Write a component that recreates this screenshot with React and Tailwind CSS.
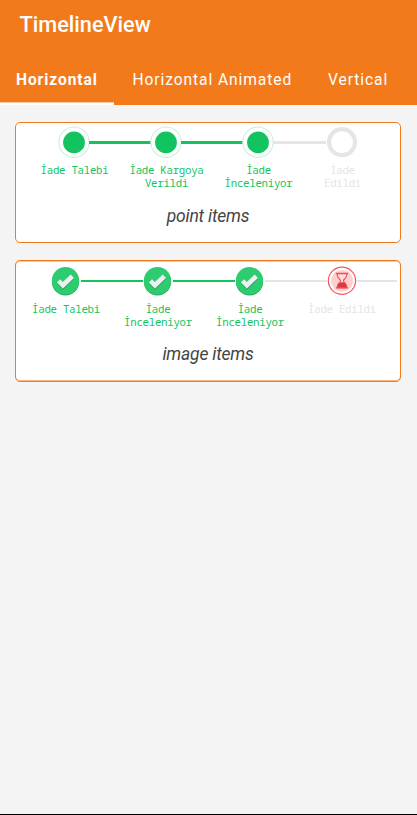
import React from "react";

function Line({ className }) {
  return <div className={`shrink-0 ${className}`} />;
}

function DonePoint() {
  return (
    <svg className="h-8 w-8 shrink-0" viewBox="0 0 32 32">
      <circle cx="16" cy="16.2" r="15.2" fill="#fff" stroke="#c9f0d8" strokeWidth="1.1" />
      <circle cx="16" cy="16.4" r="10.9" fill="#12c35f" />
    </svg>
  );
}

function PendingPoint() {
  return (
    <svg className="h-8 w-8 shrink-0" viewBox="0 0 32 32">
      <circle cx="16" cy="16.1" r="13" fill="#fff" stroke="#e5e5e5" strokeWidth="4.2" />
    </svg>
  );
}

function CheckImage() {
  return (
    <svg className="h-8 w-8 shrink-0" viewBox="0 0 32 32">
      <circle cx="15.5" cy="18" r="13.6" fill="#27ae60" />
      <circle cx="15.5" cy="16.8" r="13.7" fill="#2ecc71" />
      <path d="M6.9 19.8 10 16.6 12.9 19.3 20.8 12 23.9 15.3 12.9 26Z" fill="#27ae60" />
      <path d="M6.9 18.4 10 15.2 12.9 17.9 20.8 10.6 23.9 13.9 12.9 24.6Z" fill="#ecf0f1" />
    </svg>
  );
}

function HourglassImage() {
  return (
    <svg className="h-8 w-8 shrink-0" viewBox="0 0 32 32">
      <circle cx="16" cy="16.8" r="13.6" fill="#fff" stroke="#f2585b" strokeWidth="1.2" />
      <circle cx="16" cy="16.8" r="10.9" fill="#ffd0d0" />
      <path
        d="M11.4 9.6v2.2c0 2.4 3.2 3.2 3.2 5s-3.2 2.6-3.2 5V23.6h9.2v-1.8c0-2.4-3.2-3.2-3.2-5s3.2-2.6 3.2-5V9.6"
        fill="#ffdede"
        stroke="#f2585b"
        strokeWidth="1.2"
      />
      <path d="M11.3 23.4c0-3.2 1.9-5.2 4.7-5.2s4.7 2 4.7 5.2Z" fill="#d93a40" />
      <path d="M9.8 9.5h12.4M9.8 23.8h12.4" stroke="#ee4c50" strokeWidth="1.3" />
    </svg>
  );
}

function Label({ className, children }) {
  return (
    <div className={`shrink-0 text-center whitespace-pre-line ${className}`}>{children}</div>
  );
}

export default function App() {
  return (
    <div className="flex h-[815px] w-[417px] flex-col overflow-hidden border-b border-black bg-[#f4f4f4] font-['Roboto',sans-serif]">
      <header className="flex h-[105px] shrink-0 flex-col bg-[#f37a1b] text-white">
        <h1 className="h-[55px] pt-[9px] pl-[19.5px] text-[21.7px] leading-8 font-medium whitespace-nowrap">TimelineView</h1>
        <nav className="flex h-[50px] text-[15.6px] leading-[51px] tracking-[0.91px] whitespace-nowrap">
          <div className="w-[114px] shrink-0 border-b-2 border-white pl-4 font-bold shadow-[inset_0_-1px_0_#fac9a0] tracking-[0.9px]">Horizontal</div>
          <div className="w-[196px] shrink-0 pl-[18.5px]">Horizontal Animated</div>
          <div className="pl-[18px]">Vertical</div>
        </nav>
      </header>

      <main className="flex flex-col gap-[17px] pt-[17px] pr-4 pl-[15px]">
        <section className="h-[121px] overflow-hidden rounded-[5px] border border-[#f37a1b] bg-white">
          <div className="flex items-center pt-[3px] pl-[42px]">
            <DonePoint />
            <Line className="-mx-px h-[3px] w-[62px] bg-[#12c35f]" />
            <DonePoint />
            <Line className="-mx-px h-[3px] w-[62px] bg-[#12c35f]" />
            <DonePoint />
            <Line className="-ml-px h-[3px] w-[53px] bg-[#e5e5e5]" />
            <PendingPoint />
          </div>
          <div className="flex pt-[6px] pl-[12.5px] font-['Noto_Sans_Mono','DejaVu_Sans_Mono',monospace] text-[10.7px] leading-[13px] tracking-[-0.25px] text-[#12c35f]">
            <Label className="w-[92px]">İade Talebi</Label>
            <Label className="w-[92px]">{"İade Kargoya\nVerildi"}</Label>
            <Label className="w-[92px]">{"İade\nİnceleniyor"}</Label>
            <Label className="w-[76px] text-[#e5e5e5]">{"İade\nEdildi"}</Label>
          </div>
          <p className="pt-[14px] text-center text-[17.5px] leading-6 tracking-[-0.2px] text-[#444] italic">point items</p>
        </section>

        <section className="h-[122px] overflow-hidden rounded-[5px] border border-[#f37a1b] bg-white shadow-[inset_0_1px_0_#fac9a0,inset_0_-1px_0_#f9b582]">
          <div className="flex items-center pt-[3px] pl-[34px]">
            <CheckImage />
            <Line className="-mx-px h-[2px] w-[62px] translate-y-px bg-[#12c35f]" />
            <CheckImage />
            <Line className="-mx-px h-[2px] w-[62px] translate-y-px bg-[#12c35f]" />
            <CheckImage />
            <Line className="-mx-px h-[2px] w-[62px] translate-y-px bg-[#e5e5e5]" />
            <HourglassImage />
            <Line className="-ml-px h-[2px] w-[40px] translate-y-px bg-[#e5e5e5]" />
          </div>
          <div className="flex pt-[7px] pl-[4px] font-['Noto_Sans_Mono','DejaVu_Sans_Mono',monospace] text-[10.7px] leading-[13px] tracking-[-0.25px] text-[#12c35f]">
            <Label className="w-[92px]">İade Talebi</Label>
            <Label className="w-[92px]">{"İade\nİnceleniyor"}</Label>
            <Label className="w-[92px]">{"İade\nİnceleniyor"}</Label>
            <Label className="w-[92px] text-[#e5e5e5]">İade Edildi</Label>
          </div>
          <p className="pt-[13px] text-center text-[17.5px] leading-6 tracking-[-0.2px] text-[#444] italic">image items</p>
        </section>
      </main>
    </div>
  );
}
